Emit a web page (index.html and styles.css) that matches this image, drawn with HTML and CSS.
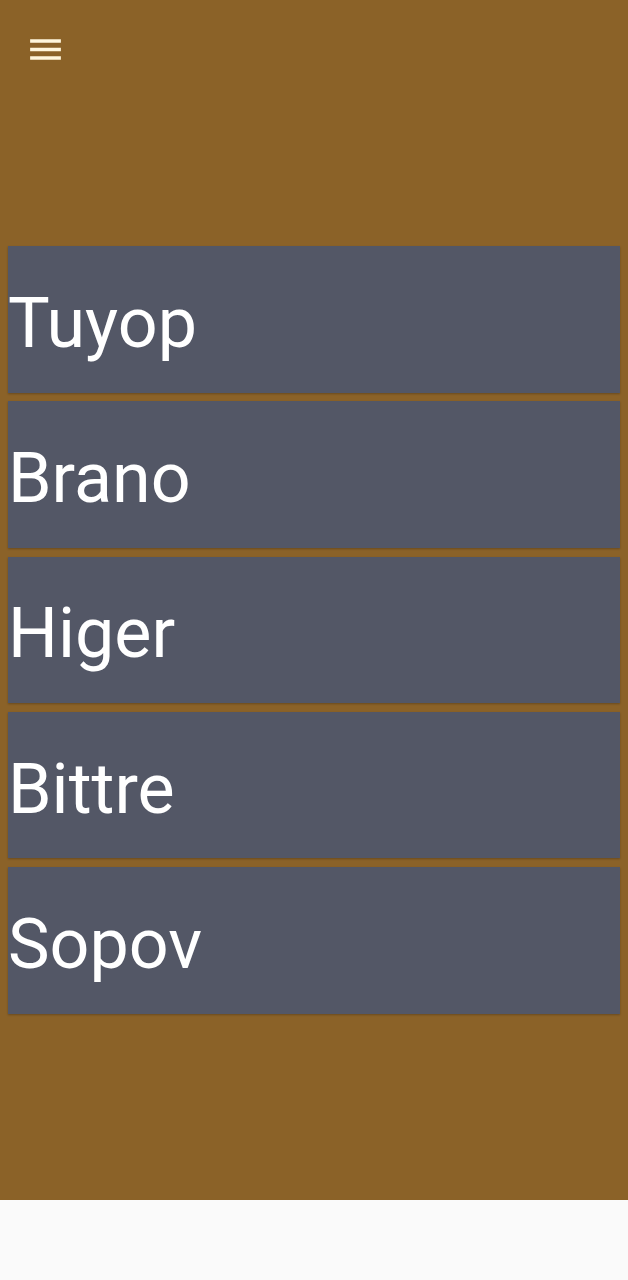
FILE: index.html
```html
<!DOCTYPE html>
<html>
<head>
<meta charset="utf-8">
<link rel="stylesheet" href="styles.css">
</head>
<body>
<div class="screen">
  <header class="toolbar">
    <button class="menu-btn" aria-label="menu">
      <svg class="menu-icon" viewBox="0 0 24 24" width="41" height="41">
        <path d="M3 6h18v2H3zM3 11h18v2H3zM3 16h18v2H3z" fill="#fff6dc"/>
      </svg>
    </button>
  </header>
  <main class="list">
    <div class="card"><span class="label">Tuyop</span></div>
    <div class="card"><span class="label">Brano</span></div>
    <div class="card"><span class="label">Higer</span></div>
    <div class="card"><span class="label">Bittre</span></div>
    <div class="card"><span class="label">Sopov</span></div>
  </main>
</div>
<div class="navbar"></div>
</body>
</html>
```

FILE: styles.css
```css
html, body {
  margin: 0;
  padding: 0;
}
body {
  background: #fafafa;
  font-family: Roboto, "Noto Sans", sans-serif;
  width: 628px;
}
.screen {
  height: 1200px;
  background: #8b6228;
  display: flex;
  flex-direction: column;
}
.toolbar {
  height: 246px;
  box-sizing: border-box;
  padding: 29px 0 0 25px;
}
.menu-btn {
  background: none;
  border: none;
  padding: 0;
  margin: 0;
  width: 41px;
  height: 41px;
  display: block;
}
.menu-icon {
  display: block;
}
.list {
  display: flex;
  flex-direction: column;
  gap: 8.75px;
  padding: 0 8px 0 8px;
}
.card {
  height: 146.5px;
  background: #535766;
  box-sizing: border-box;
  padding-top: 7px;
  display: flex;
  align-items: center;
  box-shadow: 0 1px 2px rgba(0,0,0,0.25);
}
.label {
  color: #ffffff;
  font-size: 70px;
  line-height: normal;
}
.navbar {
  height: 80px;
  background: #fafafa;
}
```
